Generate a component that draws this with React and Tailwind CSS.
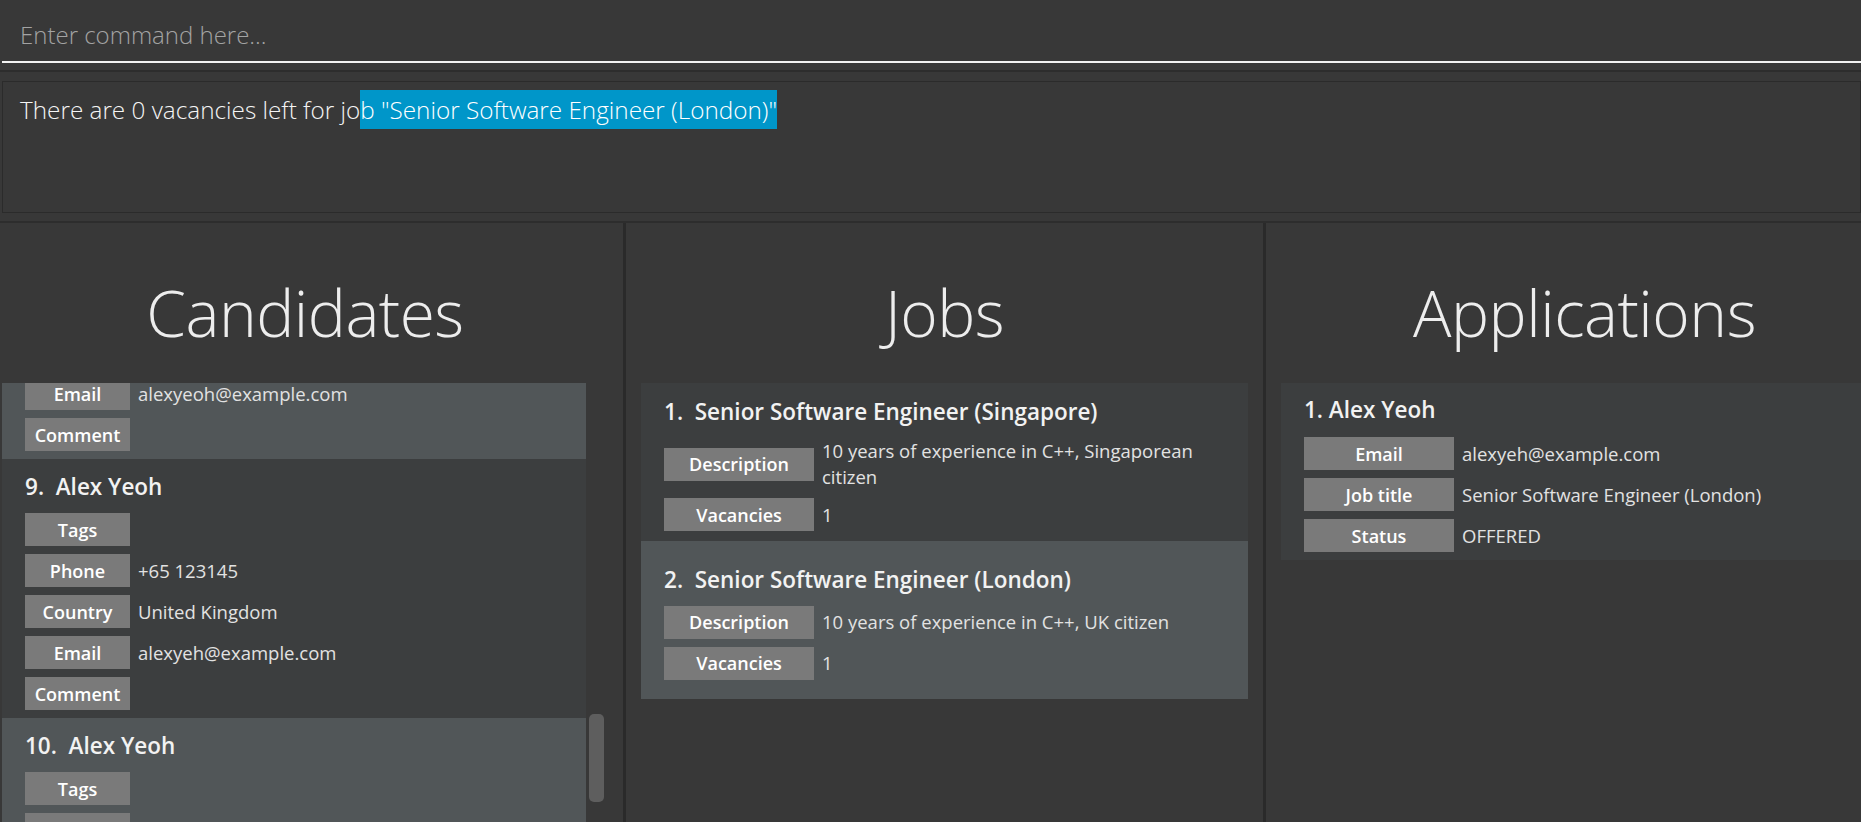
import React from "react";

function Field({ label, w, children }) {
  return (
    <div className="flex items-center gap-[8px]">
      <div
        className={`${w} h-[33px] shrink-0 bg-[#7a7a7a] flex items-center justify-center text-white font-semibold text-[18px] leading-none`}
      >
        {label}
      </div>
      <div className="text-[18.5px] leading-[26px] text-[#e2e2e2]">{children}</div>
    </div>
  );
}

function Title({ children, mb = "mb-[12px]" }) {
  return (
    <div className={`text-[22.5px] font-semibold leading-[28px] whitespace-pre text-[#f2f2f2] ${mb}`}>{children}</div>
  );
}

function CandidateCard({ num, name, odd, fields }) {
  return (
    <div className={`${odd ? "bg-[#515658]" : "bg-[#3c3e3f]"} pl-[23px] pt-[14px] pb-[8px] shrink-0`}>
      <Title>
        {num}.  {name}
      </Title>
      <div className="flex flex-col gap-[8px]">
        {fields.map(([l, v]) => (
          <Field key={l} label={l} w="w-[105px]">
            {v}
          </Field>
        ))}
      </div>
    </div>
  );
}

function JobCard({ num, title, odd, desc, vac }) {
  return (
    <div
      className={`${odd ? "bg-[#515658]" : "bg-[#3c3e3f]"} h-[158px] shrink-0 flex flex-col justify-center pl-[23px] pt-[5px]`}
    >
      <Title>
        {num}.  {title}
      </Title>
      <div className="flex flex-col gap-[8px]">
        <Field label="Description" w="w-[150px]">
          {desc}
        </Field>
        <Field label="Vacancies" w="w-[150px]">
          {vac}
        </Field>
      </div>
    </div>
  );
}

function PanelTitle({ children }) {
  return (
    <div className="h-[160px] shrink-0 flex items-center justify-center pt-[19px]">
      <span className="text-[64px] font-light leading-none tracking-[-0.5px] text-[#ededed]">{children}</span>
    </div>
  );
}

export default function App() {
  const c9 = [
    ["Tags", ""],
    ["Phone", "+65 123145"],
    ["Country", "United Kingdom"],
    ["Email", "alexyeh@example.com"],
    ["Comment", ""],
  ];
  const c10 = [
    ["Tags", ""],
    ["Phone", "+65 123145"],
    ["Country", "United Kingdom"],
  ];
  return (
    <div className="w-[1861px] h-[822px] overflow-hidden bg-[#383838] flex flex-col font-['Open_Sans','Noto_Sans',sans-serif]">
      {/* command box */}
      <div className="h-[63px] shrink-0 pl-[2px]">
        <div className="h-full border-b-2 border-[#f2f2f2] flex items-center pl-[18px] pt-[8px] text-[24px] font-light text-[#a3a3a3]">
          Enter command here...
        </div>
      </div>
      <div className="h-[7px] shrink-0" />
      <div className="h-[2px] shrink-0 bg-[#2d2d2d]" />
      <div className="h-[9px] shrink-0" />
      {/* result display */}
      <div className="h-[132px] shrink-0 ml-[2px] border border-[#2b2b2b] pl-[17px] pt-[8px]">
        <div className="text-[24.3px] font-light leading-[39px] text-[#f5f5f5] whitespace-pre">
          There are 0 vacancies left for jo
          <span className="inline-block bg-[#0096c9] text-white leading-[39px] h-[39px]">b "Senior Software Engineer (London)"</span>
        </div>
      </div>
      <div className="h-[8px] shrink-0" />
      <div className="h-[2px] shrink-0 bg-[#2d2d2d]" />
      {/* panels */}
      <div className="flex-1 min-h-0 flex -ml-[13px]">
        {/* Candidates */}
        <div className="w-[636px] shrink-0 flex flex-col min-h-0">
          <PanelTitle>Candidates</PanelTitle>
          <div className="flex-1 min-h-0 flex pl-[15px] pr-[15px]">
            <div className="flex-1 min-w-0 overflow-hidden flex flex-col">
              <div className="bg-[#515658] pl-[23px] pb-[8px] shrink-0 -mt-[6px] flex flex-col gap-[8px]">
                <Field label="Email" w="w-[105px]">alexyeoh@example.com</Field>
                <Field label="Comment" w="w-[105px]">{""}</Field>
              </div>
              <CandidateCard num={9} name="Alex Yeoh" fields={c9} />
              <CandidateCard num={10} name="Alex Yeoh" odd fields={c10} />
            </div>
            <div className="w-[22px] shrink-0 pl-[3px] pt-[331px]">
              <div className="w-[15px] h-[88px] rounded-[5px] bg-[#5e5e5e]" />
            </div>
          </div>
        </div>
        <div className="w-[3px] shrink-0 bg-[#2a2a2a]" />
        {/* Jobs */}
        <div className="w-[637px] shrink-0 flex flex-col min-h-0">
          <PanelTitle>Jobs</PanelTitle>
          <div className="flex-1 min-h-0 overflow-hidden flex flex-col px-[15px]">
            <JobCard
              num={1}
              title="Senior Software Engineer (Singapore)"
              desc={
                <>
                  10 years of experience in C++, Singaporean
                  <br />
                  citizen
                </>
              }
              vac="1"
            />
            <JobCard num={2} odd title="Senior Software Engineer (London)" desc="10 years of experience in C++, UK citizen" vac="1" />
          </div>
        </div>
        <div className="w-[3px] shrink-0 bg-[#2a2a2a]" />
        {/* Applications */}
        <div className="w-[637px] shrink-0 flex flex-col min-h-0">
          <PanelTitle>Applications</PanelTitle>
          <div className="flex-1 min-h-0 overflow-hidden flex flex-col px-[15px]">
            <div className="bg-[#3c3e3f] pl-[23px] pt-[13px] pb-[8px] shrink-0">
              <Title mb="mb-[13px]">1. Alex Yeoh</Title>
              <div className="flex flex-col gap-[8px]">
                <Field label="Email" w="w-[150px]">alexyeh@example.com</Field>
                <Field label="Job title" w="w-[150px]">Senior Software Engineer (London)</Field>
                <Field label="Status" w="w-[150px]">OFFERED</Field>
              </div>
            </div>
          </div>
        </div>
      </div>
    </div>
  );
}
